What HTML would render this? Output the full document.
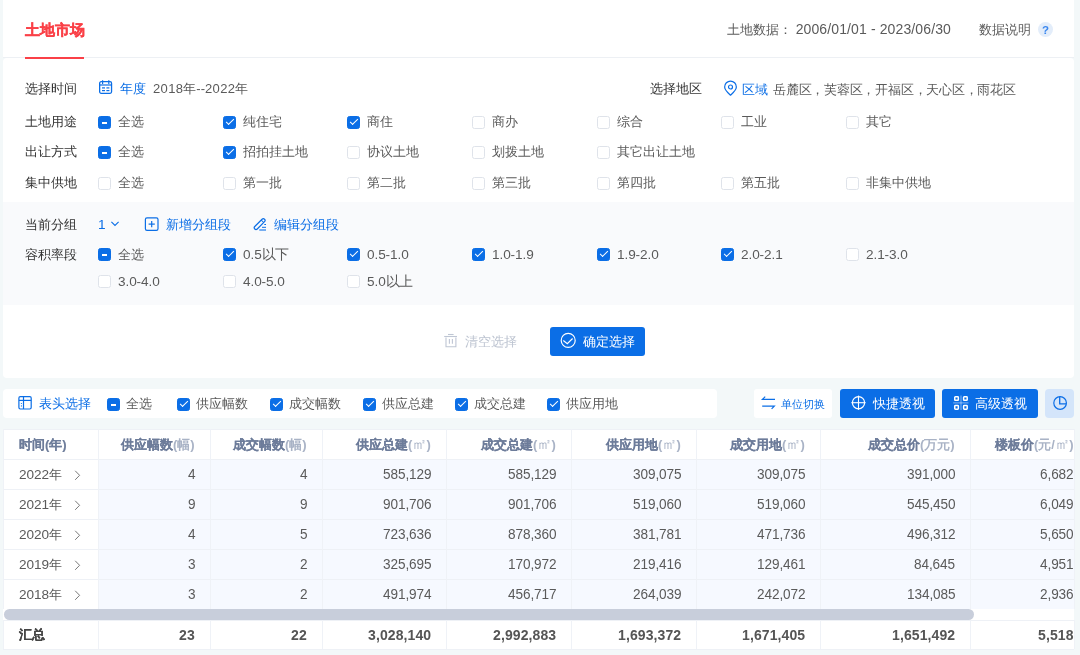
<!DOCTYPE html>
<html><head><meta charset="utf-8"><style>
*{box-sizing:border-box;margin:0;padding:0}
html,body{width:1080px;height:655px;overflow:hidden;background:#f3f8f9;font-family:"Liberation Sans",sans-serif;font-size:13px;color:#5a5a5a}
.abs{position:absolute}
.card{position:absolute;background:#fff}
.t{position:absolute;white-space:nowrap;line-height:16px;will-change:transform}
.r{position:absolute;white-space:nowrap;line-height:16px;will-change:transform;text-align:right}
.cb{position:absolute;width:13px;height:13px;border:1px solid #dfe3ea;border-radius:2.5px;background:#fff}
.cb.on,.cb.ind{background:#0b6ee6;border-color:#0b6ee6}
.cb.on::after{content:"";position:absolute;left:3.6px;top:0.4px;width:3.4px;height:6.8px;border:solid #fff;border-width:0 1px 1px 0;transform:rotate(45deg)}
.cb.ind::after{content:"";position:absolute;left:3px;top:5px;width:5.2px;height:1.5px;background:#fff}
</style></head><body>
<div class="card" style="left:3px;top:0;width:1071px;height:57px"></div>
<div class="t" style="left:25px;top:22px;color:#fa4047;font-size:14.5px;font-weight:bold;line-height:17px;-webkit-text-stroke:0.3px #fa4047">土地市场</div>
<div class="abs" style="left:3px;top:57px;width:1071px;height:1px;background:#edf0f4"></div>
<div class="abs" style="left:25px;top:56.5px;width:59px;height:2px;background:#fa4047;z-index:2"></div>
<div class="t" style="left:727px;top:21px;color:#5a5a5a;font-size:13px;font-weight:normal;">土地数据：&nbsp;<span style='font-size:14px;letter-spacing:0.12px;line-height:16px'>2006/01/01 - 2023/06/30</span></div>
<div class="t" style="left:979px;top:22px;color:#5a5a5a;font-size:13px;font-weight:normal;">数据说明</div>
<div class="abs" style="left:1038px;top:22px;width:15px;height:15px;border-radius:50%;background:#e3edfa"></div>
<div class="t" style="left:1038px;top:23px;color:#3b87ee;font-size:11.5px;font-weight:bold;width:15px;text-align:center;line-height:15px">?</div>
<div class="card" style="left:3px;top:58px;width:1071px;height:320px;border-radius:4px"></div>
<div class="t" style="left:25px;top:81px;color:#333333;font-size:13px;font-weight:normal;">选择时间</div>
<svg class="abs" style="left:99px;top:80px" width="14" height="14" viewBox="0 0 14 14"><rect x="0.65" y="1.65" width="11.9" height="11.7" rx="1.5" fill="none" stroke="#0b6ee6" stroke-width="1.3"/><line x1="0.6" y1="5" x2="12.6" y2="5" stroke="#0b6ee6" stroke-width="1.2"/><line x1="3.6" y1="0.2" x2="3.6" y2="4" stroke="#0b6ee6" stroke-width="1.2"/><line x1="9.8" y1="0.2" x2="9.8" y2="4" stroke="#0b6ee6" stroke-width="1.2"/><rect x="3" y="7.3" width="3" height="1.2" fill="#0b6ee6"/><rect x="7.4" y="7.3" width="3" height="1.2" fill="#0b6ee6"/><rect x="3" y="10" width="3" height="1.2" fill="#0b6ee6"/><rect x="7.4" y="10" width="3" height="1.2" fill="#0b6ee6"/></svg>
<div class="t" style="left:120px;top:81px;color:#0b6ee6;font-size:13px;font-weight:normal;">年度</div>
<div class="t" style="left:153px;top:81px;color:#5a5a5a;font-size:13px;font-weight:normal;"><span style='letter-spacing:0.35px'>2018</span>年--<span style='letter-spacing:0.35px'>2022</span>年</div>
<div class="t" style="left:650px;top:81px;color:#333333;font-size:13px;font-weight:normal;">选择地区</div>
<svg class="abs" style="left:723px;top:80px" width="15" height="17" viewBox="0 0 15 17"><path d="M7.5 15.2 C5.6 13.4 1.65 10 1.65 6.9 A5.85 5.85 0 0 1 13.35 6.9 C13.35 10 9.4 13.4 7.5 15.2Z" fill="none" stroke="#0b6ee6" stroke-width="1.2" stroke-linejoin="round"/><circle cx="7.5" cy="7" r="2" fill="none" stroke="#0b6ee6" stroke-width="1.2"/></svg>
<div class="t" style="left:742px;top:82px;color:#0b6ee6;font-size:13px;font-weight:normal;">区域</div>
<div class="t" style="left:773px;top:82px;color:#5a5a5a;font-size:13px;font-weight:normal;letter-spacing:-0.22px">岳麓区，芙蓉区，开福区，天心区，雨花区</div>
<div class="t" style="left:25px;top:114px;color:#333333;font-size:13px;font-weight:normal;">土地用途</div>
<div class="cb ind" style="left:98px;top:116px"></div>
<div class="t" style="left:118px;top:114px;color:#5a5a5a;font-size:13px;font-weight:normal;">全选</div>
<div class="cb on" style="left:223px;top:116px"></div>
<div class="t" style="left:243px;top:114px;color:#5a5a5a;font-size:13px;font-weight:normal;">纯住宅</div>
<div class="cb on" style="left:347px;top:116px"></div>
<div class="t" style="left:367px;top:114px;color:#5a5a5a;font-size:13px;font-weight:normal;">商住</div>
<div class="cb" style="left:472px;top:116px"></div>
<div class="t" style="left:492px;top:114px;color:#5a5a5a;font-size:13px;font-weight:normal;">商办</div>
<div class="cb" style="left:597px;top:116px"></div>
<div class="t" style="left:617px;top:114px;color:#5a5a5a;font-size:13px;font-weight:normal;">综合</div>
<div class="cb" style="left:721px;top:116px"></div>
<div class="t" style="left:741px;top:114px;color:#5a5a5a;font-size:13px;font-weight:normal;">工业</div>
<div class="cb" style="left:846px;top:116px"></div>
<div class="t" style="left:866px;top:114px;color:#5a5a5a;font-size:13px;font-weight:normal;">其它</div>
<div class="t" style="left:25px;top:144px;color:#333333;font-size:13px;font-weight:normal;">出让方式</div>
<div class="cb ind" style="left:98px;top:146px"></div>
<div class="t" style="left:118px;top:144px;color:#5a5a5a;font-size:13px;font-weight:normal;">全选</div>
<div class="cb on" style="left:223px;top:146px"></div>
<div class="t" style="left:243px;top:144px;color:#5a5a5a;font-size:13px;font-weight:normal;">招拍挂土地</div>
<div class="cb" style="left:347px;top:146px"></div>
<div class="t" style="left:367px;top:144px;color:#5a5a5a;font-size:13px;font-weight:normal;">协议土地</div>
<div class="cb" style="left:472px;top:146px"></div>
<div class="t" style="left:492px;top:144px;color:#5a5a5a;font-size:13px;font-weight:normal;">划拨土地</div>
<div class="cb" style="left:597px;top:146px"></div>
<div class="t" style="left:617px;top:144px;color:#5a5a5a;font-size:13px;font-weight:normal;">其它出让土地</div>
<div class="t" style="left:25px;top:175px;color:#333333;font-size:13px;font-weight:normal;">集中供地</div>
<div class="cb" style="left:98px;top:177px"></div>
<div class="t" style="left:118px;top:175px;color:#5a5a5a;font-size:13px;font-weight:normal;">全选</div>
<div class="cb" style="left:223px;top:177px"></div>
<div class="t" style="left:243px;top:175px;color:#5a5a5a;font-size:13px;font-weight:normal;">第一批</div>
<div class="cb" style="left:347px;top:177px"></div>
<div class="t" style="left:367px;top:175px;color:#5a5a5a;font-size:13px;font-weight:normal;">第二批</div>
<div class="cb" style="left:472px;top:177px"></div>
<div class="t" style="left:492px;top:175px;color:#5a5a5a;font-size:13px;font-weight:normal;">第三批</div>
<div class="cb" style="left:597px;top:177px"></div>
<div class="t" style="left:617px;top:175px;color:#5a5a5a;font-size:13px;font-weight:normal;">第四批</div>
<div class="cb" style="left:721px;top:177px"></div>
<div class="t" style="left:741px;top:175px;color:#5a5a5a;font-size:13px;font-weight:normal;">第五批</div>
<div class="cb" style="left:846px;top:177px"></div>
<div class="t" style="left:866px;top:175px;color:#5a5a5a;font-size:13px;font-weight:normal;">非集中供地</div>
<div class="abs" style="left:3px;top:202px;width:1071px;height:103px;background:#f9fafc"></div>
<div class="t" style="left:25px;top:217px;color:#333333;font-size:13px;font-weight:normal;">当前分组</div>
<div class="t" style="left:98px;top:217px;color:#0b6ee6;font-size:13px;font-weight:normal;font-size:13.6px;letter-spacing:-0.1px">1</div>
<svg class="abs" style="left:110px;top:220px" width="10" height="8" viewBox="0 0 10 8"><path d="M1.4 1.8 L5 5.4 L8.6 1.8" fill="none" stroke="#0b6ee6" stroke-width="1.1"/></svg>
<svg class="abs" style="left:144px;top:217px" width="15" height="15" viewBox="0 0 15 15"><rect x="1.4" y="0.8" width="12.6" height="12.6" rx="1.6" fill="none" stroke="#0b6ee6" stroke-width="1.2"/><line x1="7.7" y1="4" x2="7.7" y2="10.2" stroke="#0b6ee6" stroke-width="1.2"/><line x1="4.6" y1="7.1" x2="10.8" y2="7.1" stroke="#0b6ee6" stroke-width="1.2"/></svg>
<div class="t" style="left:166px;top:217px;color:#0b6ee6;font-size:13px;font-weight:normal;">新增分组段</div>
<svg class="abs" style="left:252px;top:216px" width="16" height="16" viewBox="0 0 16 16"><g transform="translate(7.65 8.1) rotate(-45)"><rect x="-6.9" y="-1.75" width="13.8" height="3.5" rx="1.75" fill="none" stroke="#0b6ee6" stroke-width="1.2"/><line x1="4" y1="-1.75" x2="4" y2="1.75" stroke="#0b6ee6" stroke-width="1"/></g><line x1="12.3" y1="8.5" x2="14" y2="8.5" stroke="#0b6ee6" stroke-width="1"/><line x1="10" y1="11.3" x2="14" y2="11.3" stroke="#0b6ee6" stroke-width="1"/><line x1="7.3" y1="14" x2="14" y2="14" stroke="#0b6ee6" stroke-width="1.1"/></svg>
<div class="t" style="left:274px;top:217px;color:#0b6ee6;font-size:13px;font-weight:normal;">编辑分组段</div>
<div class="t" style="left:25px;top:247px;color:#333333;font-size:13px;font-weight:normal;">容积率段</div>
<div class="cb ind" style="left:98px;top:248px"></div>
<div class="t" style="left:118px;top:247px;color:#5a5a5a;font-size:13px;font-weight:normal;">全选</div>
<div class="cb on" style="left:223px;top:248px"></div>
<div class="t" style="left:243px;top:247px;color:#5a5a5a;font-size:13px;font-weight:normal;font-size:13.6px;letter-spacing:-0.1px">0.5以下</div>
<div class="cb on" style="left:347px;top:248px"></div>
<div class="t" style="left:367px;top:247px;color:#5a5a5a;font-size:13px;font-weight:normal;font-size:13.6px;letter-spacing:-0.1px">0.5-1.0</div>
<div class="cb on" style="left:472px;top:248px"></div>
<div class="t" style="left:492px;top:247px;color:#5a5a5a;font-size:13px;font-weight:normal;font-size:13.6px;letter-spacing:-0.1px">1.0-1.9</div>
<div class="cb on" style="left:597px;top:248px"></div>
<div class="t" style="left:617px;top:247px;color:#5a5a5a;font-size:13px;font-weight:normal;font-size:13.6px;letter-spacing:-0.1px">1.9-2.0</div>
<div class="cb on" style="left:721px;top:248px"></div>
<div class="t" style="left:741px;top:247px;color:#5a5a5a;font-size:13px;font-weight:normal;font-size:13.6px;letter-spacing:-0.1px">2.0-2.1</div>
<div class="cb" style="left:846px;top:248px"></div>
<div class="t" style="left:866px;top:247px;color:#5a5a5a;font-size:13px;font-weight:normal;font-size:13.6px;letter-spacing:-0.1px">2.1-3.0</div>
<div class="cb" style="left:98px;top:275px"></div>
<div class="t" style="left:118px;top:274px;color:#5a5a5a;font-size:13px;font-weight:normal;font-size:13.6px;letter-spacing:-0.1px">3.0-4.0</div>
<div class="cb" style="left:223px;top:275px"></div>
<div class="t" style="left:243px;top:274px;color:#5a5a5a;font-size:13px;font-weight:normal;font-size:13.6px;letter-spacing:-0.1px">4.0-5.0</div>
<div class="cb" style="left:347px;top:275px"></div>
<div class="t" style="left:367px;top:274px;color:#5a5a5a;font-size:13px;font-weight:normal;font-size:13.6px;letter-spacing:-0.1px">5.0以上</div>
<svg class="abs" style="left:443px;top:333px" width="16" height="15" viewBox="0 0 16 15"><line x1="5" y1="1.5" x2="10.6" y2="1.5" stroke="#bfc6d4" stroke-width="1.1"/><line x1="1.2" y1="3.5" x2="14" y2="3.5" stroke="#bfc6d4" stroke-width="1.1"/><path d="M3 4.5 V13.7 H12.9 V4.5" fill="none" stroke="#bfc6d4" stroke-width="1.1"/><line x1="6.4" y1="6" x2="6.4" y2="10.8" stroke="#bfc6d4" stroke-width="1.1"/><line x1="9.4" y1="6" x2="9.4" y2="10.8" stroke="#bfc6d4" stroke-width="1.1"/></svg>
<div class="t" style="left:465px;top:334px;color:#bcc3d0;font-size:13px;font-weight:normal;">清空选择</div>
<div class="abs" style="left:550px;top:327px;width:95px;height:29px;border-radius:3px;background:#0b6ee6"></div>
<svg class="abs" style="left:559px;top:332px" width="18" height="18" viewBox="0 0 18 18"><circle cx="9.2" cy="8.4" r="7" fill="none" stroke="#fff" stroke-width="1.2"/><path d="M4.3 8.5 L8.3 11.7 L13.6 6.5" fill="none" stroke="#fff" stroke-width="1.2"/></svg>
<div class="t" style="left:583px;top:334px;color:#fff;font-size:13px;font-weight:normal;">确定选择</div>
<div class="card" style="left:3px;top:389px;width:714px;height:29px;border-radius:4px"></div>
<svg class="abs" style="left:17px;top:395px" width="16" height="16" viewBox="0 0 16 16"><rect x="1.9" y="1.6" width="12.3" height="12.4" rx="1.4" fill="none" stroke="#0b6ee6" stroke-width="1.2"/><line x1="1.9" y1="5.4" x2="14.2" y2="5.4" stroke="#0b6ee6" stroke-width="1.2"/><line x1="6.5" y1="1.6" x2="6.5" y2="14" stroke="#0b6ee6" stroke-width="1.2"/><circle cx="4.4" cy="8.5" r="0.6" fill="#0b6ee6"/><circle cx="4.4" cy="10.9" r="0.6" fill="#0b6ee6"/></svg>
<div class="t" style="left:39px;top:396px;color:#0b6ee6;font-size:13px;font-weight:normal;">表头选择</div>
<div class="cb ind" style="left:107px;top:398px"></div>
<div class="t" style="left:126px;top:396px;color:#5a5a5a;font-size:13px;font-weight:normal;">全选</div>
<div class="cb on" style="left:177px;top:398px"></div>
<div class="t" style="left:196px;top:396px;color:#5a5a5a;font-size:13px;font-weight:normal;">供应幅数</div>
<div class="cb on" style="left:270px;top:398px"></div>
<div class="t" style="left:289px;top:396px;color:#5a5a5a;font-size:13px;font-weight:normal;">成交幅数</div>
<div class="cb on" style="left:363px;top:398px"></div>
<div class="t" style="left:382px;top:396px;color:#5a5a5a;font-size:13px;font-weight:normal;">供应总建</div>
<div class="cb on" style="left:455px;top:398px"></div>
<div class="t" style="left:474px;top:396px;color:#5a5a5a;font-size:13px;font-weight:normal;">成交总建</div>
<div class="cb on" style="left:547px;top:398px"></div>
<div class="t" style="left:566px;top:396px;color:#5a5a5a;font-size:13px;font-weight:normal;">供应用地</div>
<div class="card" style="left:754px;top:389px;width:78px;height:29px;border-radius:3px"></div>
<svg class="abs" style="left:760px;top:394px" width="17" height="17" viewBox="0 0 17 17"><path d="M15 5.4 H2.4 L5.2 2.6" fill="none" stroke="#0b6ee6" stroke-width="1.2"/><path d="M2.2 12.1 H14.3 L11.6 14.8" fill="none" stroke="#0b6ee6" stroke-width="1.2"/></svg>
<div class="t" style="left:781px;top:396px;color:#0b6ee6;font-size:11.2px;font-weight:normal;line-height:16px">单位切换</div>
<div class="abs" style="left:840px;top:389px;width:95px;height:29px;border-radius:3px;background:#0b6ee6"></div>
<svg class="abs" style="left:851px;top:395px" width="16" height="16" viewBox="0 0 16 16"><circle cx="7.5" cy="7.7" r="6.1" fill="none" stroke="#fff" stroke-width="1.2"/><line x1="7.5" y1="0.6" x2="7.5" y2="14.8" stroke="#fff" stroke-width="1.1"/><line x1="0.4" y1="7.7" x2="14.6" y2="7.7" stroke="#fff" stroke-width="1.1"/></svg>
<div class="t" style="left:873px;top:396px;color:#fff;font-size:13px;font-weight:normal;">快捷透视</div>
<div class="abs" style="left:942px;top:389px;width:96px;height:29px;border-radius:3px;background:#0b6ee6"></div>
<svg class="abs" style="left:952px;top:394px" width="18" height="18" viewBox="0 0 18 18"><rect x="2.75" y="2.75" width="3.6" height="3.6" rx="0.7" fill="none" stroke="#fff" stroke-width="1.5"/><rect x="11.6" y="2.75" width="3.6" height="3.6" rx="0.7" fill="none" stroke="#fff" stroke-width="1.5"/><rect x="2.75" y="11.6" width="3.6" height="3.6" rx="0.7" fill="none" stroke="#fff" stroke-width="1.5"/><rect x="11.6" y="11.6" width="3.6" height="3.6" rx="0.7" fill="none" stroke="#fff" stroke-width="1.5"/><line x1="1.2" y1="8.9" x2="16.5" y2="8.9" stroke="#fff" stroke-width="0.9" opacity="0.55"/><line x1="9" y1="1.5" x2="9" y2="16" stroke="#fff" stroke-width="0.9" opacity="0.55"/></svg>
<div class="t" style="left:975px;top:396px;color:#fff;font-size:13px;font-weight:normal;">高级透视</div>
<div class="abs" style="left:1045px;top:389px;width:29px;height:29px;border-radius:4px;background:#d4e5fa"></div>
<svg class="abs" style="left:1052px;top:395px" width="16" height="16" viewBox="0 0 16 16"><circle cx="8.1" cy="8" r="6.3" fill="none" stroke="#0b6ee6" stroke-width="1.2"/><path d="M7.7 1.7 V8.8 H14.4" fill="none" stroke="#0b6ee6" stroke-width="1.3"/></svg>
<div class="abs" style="left:3px;top:429px;width:1071px;height:220px;background:#fff"></div>
<div class="abs" style="left:98px;top:459px;width:976px;height:150px;background:#f6f9ff"></div>
<div class="abs" style="left:3px;top:620px;width:1071px;height:29px;background:#fff"></div>
<div class="abs" style="left:3px;top:429px;width:1071px;height:1px;background:#eef1f6"></div>
<div class="abs" style="left:3px;top:459px;width:1071px;height:1px;background:#eef1f6"></div>
<div class="abs" style="left:3px;top:489px;width:1071px;height:1px;background:#eef1f6"></div>
<div class="abs" style="left:3px;top:519px;width:1071px;height:1px;background:#eef1f6"></div>
<div class="abs" style="left:3px;top:549px;width:1071px;height:1px;background:#eef1f6"></div>
<div class="abs" style="left:3px;top:579px;width:1071px;height:1px;background:#eef1f6"></div>
<div class="abs" style="left:3px;top:649px;width:1071px;height:1px;background:#eef1f6"></div>
<div class="abs" style="left:3px;top:620px;width:1071px;height:1px;background:#eef1f6"></div>
<div class="abs" style="left:3px;top:429px;width:1px;height:180px;background:#eff2f7"></div>
<div class="abs" style="left:3px;top:620px;width:1px;height:29px;background:#eff2f7"></div>
<div class="abs" style="left:98px;top:429px;width:1px;height:180px;background:#eff2f7"></div>
<div class="abs" style="left:98px;top:620px;width:1px;height:29px;background:#eff2f7"></div>
<div class="abs" style="left:210px;top:429px;width:1px;height:180px;background:#eff2f7"></div>
<div class="abs" style="left:210px;top:620px;width:1px;height:29px;background:#eff2f7"></div>
<div class="abs" style="left:322px;top:429px;width:1px;height:180px;background:#eff2f7"></div>
<div class="abs" style="left:322px;top:620px;width:1px;height:29px;background:#eff2f7"></div>
<div class="abs" style="left:446px;top:429px;width:1px;height:180px;background:#eff2f7"></div>
<div class="abs" style="left:446px;top:620px;width:1px;height:29px;background:#eff2f7"></div>
<div class="abs" style="left:571px;top:429px;width:1px;height:180px;background:#eff2f7"></div>
<div class="abs" style="left:571px;top:620px;width:1px;height:29px;background:#eff2f7"></div>
<div class="abs" style="left:696px;top:429px;width:1px;height:180px;background:#eff2f7"></div>
<div class="abs" style="left:696px;top:620px;width:1px;height:29px;background:#eff2f7"></div>
<div class="abs" style="left:820px;top:429px;width:1px;height:180px;background:#eff2f7"></div>
<div class="abs" style="left:820px;top:620px;width:1px;height:29px;background:#eff2f7"></div>
<div class="abs" style="left:970px;top:429px;width:1px;height:180px;background:#eff2f7"></div>
<div class="abs" style="left:970px;top:620px;width:1px;height:29px;background:#eff2f7"></div>
<div class="abs" style="left:1074px;top:429px;width:1px;height:180px;background:#eff2f7"></div>
<div class="abs" style="left:1074px;top:620px;width:1px;height:29px;background:#eff2f7"></div>
<div class="t" style="left:19px;top:437px;color:#6d7c9a;font-size:13px;font-weight:bold;-webkit-text-stroke:0.12px #6d7c9a">时间(年)</div>
<div class="r" style="right:885px;top:437px;font-weight:bold;color:#6d7c9a;-webkit-text-stroke:0.12px #6d7c9a">供应幅数<span style="color:#a9b3c6;-webkit-text-stroke:0">(幅)</span></div>
<div class="r" style="right:773px;top:437px;font-weight:bold;color:#6d7c9a;-webkit-text-stroke:0.12px #6d7c9a">成交幅数<span style="color:#a9b3c6;-webkit-text-stroke:0">(幅)</span></div>
<div class="r" style="right:649px;top:437px;font-weight:bold;color:#6d7c9a;-webkit-text-stroke:0.12px #6d7c9a">供应总建<span style="color:#a9b3c6;-webkit-text-stroke:0">(<span style="font-size:14.5px;font-weight:normal;letter-spacing:-0.8px;line-height:10px;vertical-align:0px">㎡</span>)</span></div>
<div class="r" style="right:524px;top:437px;font-weight:bold;color:#6d7c9a;-webkit-text-stroke:0.12px #6d7c9a">成交总建<span style="color:#a9b3c6;-webkit-text-stroke:0">(<span style="font-size:14.5px;font-weight:normal;letter-spacing:-0.8px;line-height:10px;vertical-align:0px">㎡</span>)</span></div>
<div class="r" style="right:399px;top:437px;font-weight:bold;color:#6d7c9a;-webkit-text-stroke:0.12px #6d7c9a">供应用地<span style="color:#a9b3c6;-webkit-text-stroke:0">(<span style="font-size:14.5px;font-weight:normal;letter-spacing:-0.8px;line-height:10px;vertical-align:0px">㎡</span>)</span></div>
<div class="r" style="right:275px;top:437px;font-weight:bold;color:#6d7c9a;-webkit-text-stroke:0.12px #6d7c9a">成交用地<span style="color:#a9b3c6;-webkit-text-stroke:0">(<span style="font-size:14.5px;font-weight:normal;letter-spacing:-0.8px;line-height:10px;vertical-align:0px">㎡</span>)</span></div>
<div class="r" style="right:125px;top:437px;font-weight:bold;color:#6d7c9a;-webkit-text-stroke:0.12px #6d7c9a">成交总价<span style="color:#a9b3c6;-webkit-text-stroke:0">(万元)</span></div>
<div class="r" style="right:7px;top:437px;font-weight:bold;color:#6d7c9a;-webkit-text-stroke:0.12px #6d7c9a">楼板价<span style="color:#a9b3c6;-webkit-text-stroke:0">(元/<span style="font-size:14.5px;font-weight:normal;letter-spacing:-0.8px;line-height:10px;vertical-align:0px">㎡</span>)</span></div>
<div class="t" style="left:19px;top:467px;color:#5a5a5a;font-size:13px;font-weight:normal;"><span style="font-size:13.6px;letter-spacing:-0.1px">2022</span>年</div>
<svg class="abs" style="left:73px;top:469px" width="8" height="12" viewBox="0 0 8 12"><path d="M2.2 1.8 L6.6 6.3 L2.2 10.8" fill="none" stroke="#777" stroke-width="1"/></svg>
<div class="r" style="right:885px;top:467px;font-size:13.6px;letter-spacing:-0.1px;transform:scaleY(1.08);transform-origin:50% 12px">4</div>
<div class="r" style="right:773px;top:467px;font-size:13.6px;letter-spacing:-0.1px;transform:scaleY(1.08);transform-origin:50% 12px">4</div>
<div class="r" style="right:649px;top:467px;font-size:13.6px;letter-spacing:-0.1px;transform:scaleY(1.08);transform-origin:50% 12px">585,129</div>
<div class="r" style="right:524px;top:467px;font-size:13.6px;letter-spacing:-0.1px;transform:scaleY(1.08);transform-origin:50% 12px">585,129</div>
<div class="r" style="right:399px;top:467px;font-size:13.6px;letter-spacing:-0.1px;transform:scaleY(1.08);transform-origin:50% 12px">309,075</div>
<div class="r" style="right:275px;top:467px;font-size:13.6px;letter-spacing:-0.1px;transform:scaleY(1.08);transform-origin:50% 12px">309,075</div>
<div class="r" style="right:125px;top:467px;font-size:13.6px;letter-spacing:-0.1px;transform:scaleY(1.08);transform-origin:50% 12px">391,000</div>
<div class="r" style="right:6px;top:467px;font-size:13.6px;letter-spacing:-0.1px;transform:scaleY(1.08);transform-origin:50% 12px">6,682</div>
<div class="t" style="left:19px;top:497px;color:#5a5a5a;font-size:13px;font-weight:normal;"><span style="font-size:13.6px;letter-spacing:-0.1px">2021</span>年</div>
<svg class="abs" style="left:73px;top:499px" width="8" height="12" viewBox="0 0 8 12"><path d="M2.2 1.8 L6.6 6.3 L2.2 10.8" fill="none" stroke="#777" stroke-width="1"/></svg>
<div class="r" style="right:885px;top:497px;font-size:13.6px;letter-spacing:-0.1px;transform:scaleY(1.08);transform-origin:50% 12px">9</div>
<div class="r" style="right:773px;top:497px;font-size:13.6px;letter-spacing:-0.1px;transform:scaleY(1.08);transform-origin:50% 12px">9</div>
<div class="r" style="right:649px;top:497px;font-size:13.6px;letter-spacing:-0.1px;transform:scaleY(1.08);transform-origin:50% 12px">901,706</div>
<div class="r" style="right:524px;top:497px;font-size:13.6px;letter-spacing:-0.1px;transform:scaleY(1.08);transform-origin:50% 12px">901,706</div>
<div class="r" style="right:399px;top:497px;font-size:13.6px;letter-spacing:-0.1px;transform:scaleY(1.08);transform-origin:50% 12px">519,060</div>
<div class="r" style="right:275px;top:497px;font-size:13.6px;letter-spacing:-0.1px;transform:scaleY(1.08);transform-origin:50% 12px">519,060</div>
<div class="r" style="right:125px;top:497px;font-size:13.6px;letter-spacing:-0.1px;transform:scaleY(1.08);transform-origin:50% 12px">545,450</div>
<div class="r" style="right:6px;top:497px;font-size:13.6px;letter-spacing:-0.1px;transform:scaleY(1.08);transform-origin:50% 12px">6,049</div>
<div class="t" style="left:19px;top:527px;color:#5a5a5a;font-size:13px;font-weight:normal;"><span style="font-size:13.6px;letter-spacing:-0.1px">2020</span>年</div>
<svg class="abs" style="left:73px;top:529px" width="8" height="12" viewBox="0 0 8 12"><path d="M2.2 1.8 L6.6 6.3 L2.2 10.8" fill="none" stroke="#777" stroke-width="1"/></svg>
<div class="r" style="right:885px;top:527px;font-size:13.6px;letter-spacing:-0.1px;transform:scaleY(1.08);transform-origin:50% 12px">4</div>
<div class="r" style="right:773px;top:527px;font-size:13.6px;letter-spacing:-0.1px;transform:scaleY(1.08);transform-origin:50% 12px">5</div>
<div class="r" style="right:649px;top:527px;font-size:13.6px;letter-spacing:-0.1px;transform:scaleY(1.08);transform-origin:50% 12px">723,636</div>
<div class="r" style="right:524px;top:527px;font-size:13.6px;letter-spacing:-0.1px;transform:scaleY(1.08);transform-origin:50% 12px">878,360</div>
<div class="r" style="right:399px;top:527px;font-size:13.6px;letter-spacing:-0.1px;transform:scaleY(1.08);transform-origin:50% 12px">381,781</div>
<div class="r" style="right:275px;top:527px;font-size:13.6px;letter-spacing:-0.1px;transform:scaleY(1.08);transform-origin:50% 12px">471,736</div>
<div class="r" style="right:125px;top:527px;font-size:13.6px;letter-spacing:-0.1px;transform:scaleY(1.08);transform-origin:50% 12px">496,312</div>
<div class="r" style="right:6px;top:527px;font-size:13.6px;letter-spacing:-0.1px;transform:scaleY(1.08);transform-origin:50% 12px">5,650</div>
<div class="t" style="left:19px;top:557px;color:#5a5a5a;font-size:13px;font-weight:normal;"><span style="font-size:13.6px;letter-spacing:-0.1px">2019</span>年</div>
<svg class="abs" style="left:73px;top:559px" width="8" height="12" viewBox="0 0 8 12"><path d="M2.2 1.8 L6.6 6.3 L2.2 10.8" fill="none" stroke="#777" stroke-width="1"/></svg>
<div class="r" style="right:885px;top:557px;font-size:13.6px;letter-spacing:-0.1px;transform:scaleY(1.08);transform-origin:50% 12px">3</div>
<div class="r" style="right:773px;top:557px;font-size:13.6px;letter-spacing:-0.1px;transform:scaleY(1.08);transform-origin:50% 12px">2</div>
<div class="r" style="right:649px;top:557px;font-size:13.6px;letter-spacing:-0.1px;transform:scaleY(1.08);transform-origin:50% 12px">325,695</div>
<div class="r" style="right:524px;top:557px;font-size:13.6px;letter-spacing:-0.1px;transform:scaleY(1.08);transform-origin:50% 12px">170,972</div>
<div class="r" style="right:399px;top:557px;font-size:13.6px;letter-spacing:-0.1px;transform:scaleY(1.08);transform-origin:50% 12px">219,416</div>
<div class="r" style="right:275px;top:557px;font-size:13.6px;letter-spacing:-0.1px;transform:scaleY(1.08);transform-origin:50% 12px">129,461</div>
<div class="r" style="right:125px;top:557px;font-size:13.6px;letter-spacing:-0.1px;transform:scaleY(1.08);transform-origin:50% 12px">84,645</div>
<div class="r" style="right:6px;top:557px;font-size:13.6px;letter-spacing:-0.1px;transform:scaleY(1.08);transform-origin:50% 12px">4,951</div>
<div class="t" style="left:19px;top:587px;color:#5a5a5a;font-size:13px;font-weight:normal;"><span style="font-size:13.6px;letter-spacing:-0.1px">2018</span>年</div>
<svg class="abs" style="left:73px;top:589px" width="8" height="12" viewBox="0 0 8 12"><path d="M2.2 1.8 L6.6 6.3 L2.2 10.8" fill="none" stroke="#777" stroke-width="1"/></svg>
<div class="r" style="right:885px;top:587px;font-size:13.6px;letter-spacing:-0.1px;transform:scaleY(1.08);transform-origin:50% 12px">3</div>
<div class="r" style="right:773px;top:587px;font-size:13.6px;letter-spacing:-0.1px;transform:scaleY(1.08);transform-origin:50% 12px">2</div>
<div class="r" style="right:649px;top:587px;font-size:13.6px;letter-spacing:-0.1px;transform:scaleY(1.08);transform-origin:50% 12px">491,974</div>
<div class="r" style="right:524px;top:587px;font-size:13.6px;letter-spacing:-0.1px;transform:scaleY(1.08);transform-origin:50% 12px">456,717</div>
<div class="r" style="right:399px;top:587px;font-size:13.6px;letter-spacing:-0.1px;transform:scaleY(1.08);transform-origin:50% 12px">264,039</div>
<div class="r" style="right:275px;top:587px;font-size:13.6px;letter-spacing:-0.1px;transform:scaleY(1.08);transform-origin:50% 12px">242,072</div>
<div class="r" style="right:125px;top:587px;font-size:13.6px;letter-spacing:-0.1px;transform:scaleY(1.08);transform-origin:50% 12px">134,085</div>
<div class="r" style="right:6px;top:587px;font-size:13.6px;letter-spacing:-0.1px;transform:scaleY(1.08);transform-origin:50% 12px">2,936</div>
<div class="abs" style="left:4px;top:609px;width:970px;height:11px;border-radius:6px;background:#c8cedb"></div>
<div class="t" style="left:19px;top:627px;color:#444;font-size:13px;font-weight:bold;-webkit-text-stroke:0.15px #444">汇总</div>
<div class="r" style="right:885px;top:627px;font-weight:bold;color:#555;font-size:14px;letter-spacing:0.1px">23</div>
<div class="r" style="right:773px;top:627px;font-weight:bold;color:#555;font-size:14px;letter-spacing:0.1px">22</div>
<div class="r" style="right:649px;top:627px;font-weight:bold;color:#555;font-size:14px;letter-spacing:0.1px">3,028,140</div>
<div class="r" style="right:524px;top:627px;font-weight:bold;color:#555;font-size:14px;letter-spacing:0.1px">2,992,883</div>
<div class="r" style="right:399px;top:627px;font-weight:bold;color:#555;font-size:14px;letter-spacing:0.1px">1,693,372</div>
<div class="r" style="right:275px;top:627px;font-weight:bold;color:#555;font-size:14px;letter-spacing:0.1px">1,671,405</div>
<div class="r" style="right:125px;top:627px;font-weight:bold;color:#555;font-size:14px;letter-spacing:0.1px">1,651,492</div>
<div class="r" style="right:6px;top:627px;font-weight:bold;color:#555;font-size:14px;letter-spacing:0.1px">5,518</div>
</body></html>
